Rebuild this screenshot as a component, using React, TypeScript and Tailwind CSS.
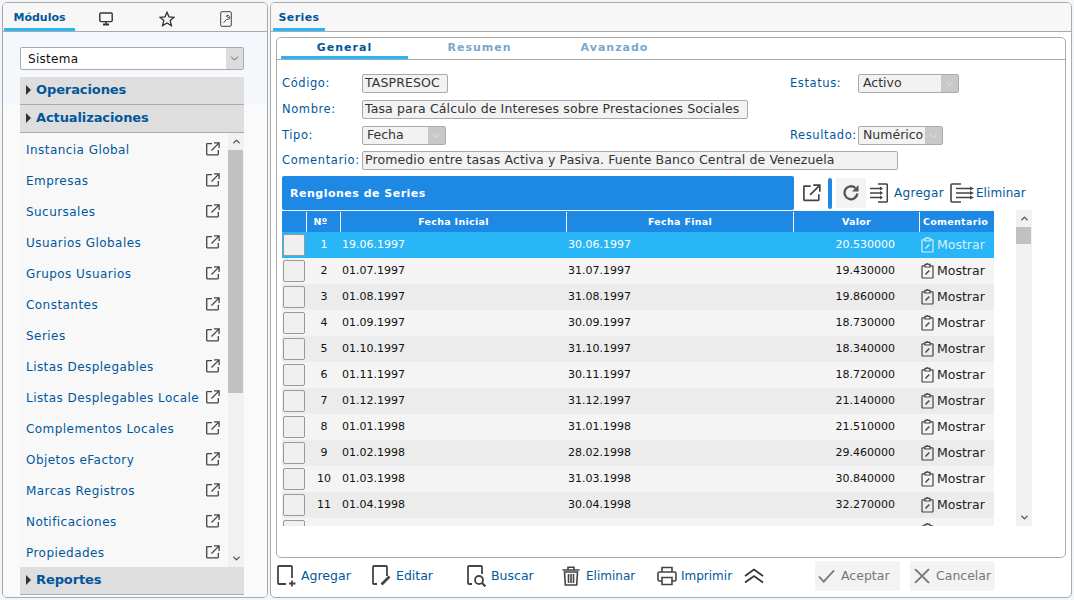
import { ChevronDown, ChevronUp } from 'lucide-react';

const modules = [
  'Instancia Global',
  'Empresas',
  'Sucursales',
  'Usuarios Globales',
  'Grupos Usuarios',
  'Constantes',
  'Series',
  'Listas Desplegables',
  'Listas Desplegables Locale',
  'Complementos Locales',
  'Objetos eFactory',
  'Marcas Registros',
  'Notificaciones',
  'Propiedades',
];

const rows = [
  ['1', '19.06.1997', '30.06.1997', '20.530000'],
  ['2', '01.07.1997', '31.07.1997', '19.430000'],
  ['3', '01.08.1997', '31.08.1997', '19.860000'],
  ['4', '01.09.1997', '30.09.1997', '18.730000'],
  ['5', '01.10.1997', '31.10.1997', '18.340000'],
  ['6', '01.11.1997', '30.11.1997', '18.720000'],
  ['7', '01.12.1997', '31.12.1997', '21.140000'],
  ['8', '01.01.1998', '31.01.1998', '21.510000'],
  ['9', '01.02.1998', '28.02.1998', '29.460000'],
  ['10', '01.03.1998', '31.03.1998', '30.840000'],
  ['11', '01.04.1998', '30.04.1998', '32.270000'],
  ['', '', '', ''], // only the top of this row shows above the fold
];

const ExternalIcon = ({ size = 14 }: { size?: number }) => (
  <svg width={size} height={size} viewBox="0 0 14 14" fill="none" stroke="currentColor" strokeWidth="1.3">
    <path d="M6 1.7H1.2a.5.5 0 0 0-.5.5v10.1a.5.5 0 0 0 .5.5h10.6a.5.5 0 0 0 .5-.5V8" />
    <path d="M5.5 8.5 12.6 1.4M8 .9h5.1V6" />
  </svg>
);

const ClipIcon = () => (
  <svg width="13" height="16" viewBox="0 0 13 16" fill="none" stroke="currentColor" strokeWidth="1.2">
    <path d="M4 2.8H1.600a.6.6 0 0 0-.6.6v11a.6.6 0 0 0 .6.6h9.800a.6.6 0 0 0 .6-.6v-11a.6.6 0 0 0-.6-.6H9" />
    <path d="M4 4V1.400h1.700a.8.8 0 0 1 1.600 0H9V4z" />
    <path d="M4.500 11.500 8.300 7.500" strokeWidth="1.400" />
  </svg>
);

const Arrow = () => <span className="mr-[5px] h-0 w-0 border-y-[5px] border-l-[5px] border-y-transparent border-l-[#333]" />;

const Group = ({ label }: { label: string }) => (
  <div className="flex h-[28px] items-center border-b border-[#aaa] bg-[#dedede] pb-[2px] pl-[6px] text-[13px] font-bold tracking-[-0.1px] text-[#01579b]">
    <Arrow />
    {label}
  </div>
);

const ReadBox = ({ w, children }: { w: string; children: string }) => (
  <div className={`flex h-[19px] items-center rounded-[2px] border border-[#aaa] bg-[#f2f2f2] pl-[2px] text-[12.5px] tracking-[0.12px] text-[#333] ${w}`}>{children}</div>
);

const ReadSelect = ({ w, children }: { w: string; children: string }) => (
  <div className={`flex h-[19px] items-center justify-between rounded-[2px] border border-[#aaa] bg-[#f2f2f2] pl-[4px] text-[12.5px] text-[#333] ${w}`}>
    {children}
    <span className="flex h-full w-[17px] items-center justify-center bg-[#c8c8c8] text-[#e8e8e8]">
      <ChevronDown size={13} strokeWidth={1.5} />
    </span>
  </div>
);

const Label = ({ w, children }: { w: string; children: string }) => (
  <div className={`text-[11.5px] tracking-[0.6px] text-[#01579b] ${w}`}>{children}</div>
);

const ToolBtn = ({ w, icon, label, text = 'text-[12.5px]' }: { w: string; icon: React.ReactNode; label: string; text?: string }) => (
  <div className={`flex items-center text-[#01579b] ${text} ${w}`}>
    <span className="flex w-[24px] shrink-0 items-center text-[#444]">{icon}</span>
    {label}
  </div>
);

export default function App() {
  return (
    <div className="flex h-[600px] w-[1074px] gap-[2px] overflow-hidden bg-[#f3f6f9] p-[2px] font-['DejaVu_Sans',sans-serif]">
      {/* left panel */}
      <div className="flex h-[596px] w-[266px] shrink-0 flex-col overflow-hidden rounded-[5px] border border-[#aaa] bg-[#fafafa]">
        <div className="flex h-[29px] shrink-0 items-stretch border-b border-[#aaa] bg-[#f7f7f7] pl-[1px]">
          <div className="flex w-[71px] items-center justify-center border-b-[3px] border-[#29b6f6] pt-[5px] text-[11px] font-bold text-[#01579b]">Módulos</div>
          <div className="flex w-[62px] items-center justify-center pt-[3px] text-[#333]">
            <svg width="14" height="14" viewBox="0 0 14 14" fill="none" stroke="currentColor" strokeWidth="1.4">
              <rect x="0.8" y="1" width="12.4" height="8.6" rx="1" />
              <path d="M4 12.6h6" strokeWidth="2" />
              <path d="M7 10v2" />
            </svg>
          </div>
          <div className="flex w-[59px] items-center justify-center pt-[3px] text-[#333]">
            <svg width="16" height="16" viewBox="0 0 16 16" fill="none" stroke="currentColor" strokeWidth="1.3">
              <path d="m8 1.2 2 4.6 5 .5-3.8 3.3 1.2 5L8 12l-4.4 2.6 1.2-5L1 6.3l5-.5z" />
            </svg>
          </div>
          <div className="flex w-[60px] items-center justify-center pt-[3px] text-[#444]">
            <svg width="12" height="16" viewBox="0 0 12 16" fill="none" stroke="currentColor" strokeWidth="1">
              <rect x="0.7" y="0.7" width="10.6" height="14.6" rx="1.2" />
              <path d="m3.600 11.800 3-3.600M6 5.800a2 2 0 0 1 2.600-1.400L7.400 5.800l1 1 1.300-1.200A2 2 0 0 1 7 8.200" />
            </svg>
          </div>
        </div>
        <div className="flex min-h-0 flex-1 flex-col bg-gradient-to-b from-[#f4f7fb] from-[13%] to-[#fafafa] to-[13%] pl-[17px] pr-[23px] pt-[15px]">
          <div className="flex h-[23px] shrink-0 items-center justify-between rounded-[2px] border border-[#aaa] bg-white pl-[7px] text-[12px] tracking-[0.3px] text-[#111]">
            Sistema
            <span className="flex h-full w-[17px] items-center justify-center bg-[#dcdcdc] text-[#444]">
              <ChevronDown size={13} strokeWidth={1.5} />
            </span>
          </div>
          <div className="mt-[7px] shrink-0 overflow-hidden rounded-t-[2px]">
            <Group label="Operaciones" />
            <Group label="Actualizaciones" />
          </div>
          <div className="flex h-[434px] shrink-0 bg-[#f8f8f8]">
            <div className="min-w-0 flex-1 overflow-hidden pl-[6px] pt-[1px]">
              {modules.map((m) => (
                <div key={m} className="flex h-[31px] items-center justify-between pr-[8px] text-[12px] tracking-[0.45px] text-[#01579b]">
                  <span className="whitespace-nowrap">{m}</span>
                  <span className="mb-[2px] text-[#444]"><ExternalIcon /></span>
                </div>
              ))}
            </div>
            <div className="flex w-[16px] shrink-0 flex-col items-center justify-between bg-[#f1f1f1]">
              <div className="flex h-[17px] items-center"><ChevronUp size={11} strokeWidth={3} className="text-[#505050]" /></div>
              <div className="w-full flex-1">
                <div className="h-[243px] w-[15px] bg-[#c1c1c1]" />
              </div>
              <div className="flex h-[17px] items-center"><ChevronDown size={11} strokeWidth={3} className="text-[#505050]" /></div>
            </div>
          </div>
          <Group label="Reportes" />
        </div>
      </div>

      {/* right panel */}
      <div className="flex h-[596px] w-[802px] min-w-0 flex-col overflow-hidden rounded-[5px] border border-[#aaa] bg-white">
        <div className="flex h-[29px] shrink-0 items-stretch border-b border-[#aaa] bg-[#f7f7f7] pl-[2px]">
          <div className="flex w-[52px] items-center justify-center border-b-[3px] border-[#29b6f6] pt-[5px] text-[11px] font-bold tracking-[0.4px] text-[#01579b]">Series</div>
        </div>
        <div className="mx-[5px] mt-[5px] flex h-[521px] shrink-0 flex-col rounded-[5px] border border-[#aaa] bg-white">
          <div className="flex h-[22px] shrink-0 items-stretch gap-[8px] border-b border-[#aaa] pl-[4px]">
            <div className="flex w-[127px] items-center justify-center border-b-[3px] border-[#29b6f6] pt-[3px] text-[11px] font-bold tracking-[1px] text-[#01579b]">General</div>
            <div className="flex w-[127px] items-center justify-center pb-[1px] text-[11px] font-bold tracking-[1px] text-[#7ba7cc]">Resumen</div>
            <div className="flex w-[127px] items-center justify-center pb-[1px] text-[11px] font-bold tracking-[1px] text-[#7ba7cc]">Avanzado</div>
          </div>
          <div className="flex flex-col gap-[7px] pl-[5px] pt-[14px]">
            <div className="flex items-center">
              <div className="flex w-[508px] items-center">
                <Label w="w-[80px]">Código:</Label>
                <ReadBox w="w-[86px]">TASPRESOC</ReadBox>
              </div>
              <Label w="w-[68px]">Estatus:</Label>
              <ReadSelect w="w-[101px]">Activo</ReadSelect>
            </div>
            <div className="flex items-center">
              <Label w="w-[80px]">Nombre:</Label>
              <ReadBox w="w-[386px]">Tasa para Cálculo de Intereses sobre Prestaciones Sociales</ReadBox>
            </div>
            <div className="-mb-[1px] flex items-center">
              <div className="flex w-[508px] items-center">
                <Label w="w-[80px]">Tipo:</Label>
                <ReadSelect w="w-[84px]">Fecha</ReadSelect>
              </div>
              <Label w="w-[68px]">Resultado:</Label>
              <ReadSelect w="w-[85px]">Numérico</ReadSelect>
            </div>
            <div className="flex items-center">
              <Label w="w-[80px]">Comentario:</Label>
              <ReadBox w="w-[536px]">Promedio entre tasas Activa y Pasiva. Fuente Banco Central de Venezuela</ReadBox>
            </div>
          </div>

          <div className="mt-[6px] flex h-[34px] shrink-0 items-center pl-[5px]">
            <div className="flex h-[34px] w-[512px] items-center rounded-[2px] bg-[#1e88e5] pl-[8px] pt-[2px] text-[11px] font-bold tracking-[0.5px] text-white">Renglones de Series</div>
            <span className="ml-[9px] text-[#444]"><ExternalIcon size={18} /></span>
            <span className="ml-[7px] h-[31px] w-[4px] rounded-[2px] bg-[#1e88e5]" />
            <span className="ml-[4px] flex h-[30px] w-[30px] items-center justify-center rounded-[2px] bg-[#f3f3f3] text-[#555]">
              <svg width="18" height="18" viewBox="0 0 18 18" fill="none" stroke="currentColor" strokeWidth="2.3">
                <path d="M15.400 9.500A6.500 6.500 0 1 1 13.400 4" />
                <path d="M16.500 1v6.500H10z" fill="currentColor" stroke="none" />
              </svg>
            </span>
            <span className="ml-[4px] text-[#444]">
              <svg width="18" height="20" viewBox="0 0 18 20" fill="none" stroke="currentColor" strokeWidth="1.6">
                <path d="M8 1h8.500a.8.800 0 0 1 .8.800v16.400a.8.800 0 0 1-.8.800H8" />
                <path d="M0 5.500h12M0 10h12M0 14.500h12" strokeWidth="1.300" />
                <path d="m10 3.500 3 2-3 2zM10 8l3 2-3 2zM10 12.500l3 2-3 2z" fill="currentColor" stroke="none" />
              </svg>
            </span>
            <span className="ml-[6px] text-[12px] tracking-[0.3px] text-[#01579b]">Agregar</span>
            <span className="ml-[6px] text-[#444]">
              <svg width="24" height="20" viewBox="0 0 24 20" fill="none" stroke="currentColor" strokeWidth="1.600">
                <path d="M11 1H2a1 1 0 0 0-1 1v16a1 1 0 0 0 1 1h9" />
                <path d="M6 5.500h15M6 10h15M6 14.500h15" strokeWidth="1.300" />
                <path d="m20 3.500 4 2-4 2zM20 8l4 2-4 2zM20 12.500l4 2-4 2z" fill="currentColor" stroke="none" />
              </svg>
            </span>
            <span className="ml-[2px] text-[12px] tracking-[0.1px] text-[#01579b]">Eliminar</span>
          </div>

          <div className="flex h-[316px] shrink-0 pl-[5px]">
            <div className="h-full w-[712px] overflow-hidden bg-[#fafafa]">
              <div className="mt-[1px] grid h-[21px] grid-cols-[25px_34px_226px_227px_126px_74px] bg-[#1e88e5] pt-[1px] text-[9.5px] font-bold tracking-[0.3px] text-white">
                <div className="border-r border-white" />
                <div className="flex items-center justify-center border-r border-white pr-[6px]">Nº</div>
                <div className="flex items-center justify-center border-r border-white">Fecha Inicial</div>
                <div className="flex items-center justify-center border-r border-white">Fecha Final</div>
                <div className="flex items-center justify-center border-r border-white">Valor</div>
                <div className="flex items-center justify-center whitespace-nowrap pr-[3px]">Comentario</div>
              </div>
              {rows.map((r, i) => {
                const selected = i === 0;
                const bg = selected ? 'bg-[#29b6f6] text-white' : i % 2 === 1 ? 'bg-[#f4f4f4] text-[#111]' : 'bg-[#ececec] text-[#111]';
                return (
                  <div key={i} className={`grid h-[26px] grid-cols-[25px_34px_226px_227px_126px_74px] items-center text-[11px] ${bg}`}>
                    <div className="pl-[1px]">
                      <div className="h-[22px] w-[22px] rounded-[2px] border border-[#999] bg-[#f0f0f0]" />
                    </div>
                    <div className="text-center">{r[0]}</div>
                    <div className="pl-[1px]">{r[1]}</div>
                    <div className="pl-[1px]">{r[2]}</div>
                    <div className="pr-[25px] text-right">{r[3]}</div>
                    <div className={`flex items-center gap-[3px] pl-[1px] text-[12.5px] ${selected ? 'text-[#d5f0fd]' : 'text-[#222]'}`}>
                      <span className={selected ? 'text-[#d5f0fd]' : 'text-[#444]'}><ClipIcon /></span>
                      {r[1] && 'Mostrar'}
                    </div>
                  </div>
                );
              })}
            </div>
            <div className="ml-[22px] flex h-full w-[16px] shrink-0 flex-col items-center justify-between bg-[#f1f1f1]">
              <div className="flex h-[17px] items-center"><ChevronUp size={11} strokeWidth={3} className="text-[#505050]" /></div>
              <div className="w-full flex-1">
                <div className="h-[17px] w-[15px] bg-[#c1c1c1]" />
              </div>
              <div className="flex h-[17px] items-center"><ChevronDown size={11} strokeWidth={3} className="text-[#505050]" /></div>
            </div>
          </div>
        </div>

        <div className="flex h-[40px] shrink-0 items-center pb-[4px] pl-[6px]">
          <ToolBtn
            w="w-[95px]"
            label="Agregar"
            icon={
              <svg width="20" height="22" viewBox="0 0 20 22" fill="none" stroke="currentColor" strokeWidth="1.8">
                <path d="M9 19H2a1 1 0 0 1-1-1V2a1 1 0 0 1 1-1h12a1 1 0 0 1 1 1v11" />
                <path d="M15 15.500v6M12 18.500h6.500" />
              </svg>
            }
          />
          <ToolBtn
            w="w-[95px]"
            label="Editar"
            icon={
              <svg width="20" height="22" viewBox="0 0 20 22" fill="none" stroke="currentColor" strokeWidth="1.8">
                <path d="M5 19H2a1 1 0 0 1-1-1V2a1 1 0 0 1 1-1h12a1 1 0 0 1 1 1v9" />
                <path d="m9.500 19.500 8-8" strokeWidth="2.600" />
              </svg>
            }
          />
          <ToolBtn
            w="w-[95px]"
            label="Buscar"
            icon={
              <svg width="20" height="22" viewBox="0 0 20 22" fill="none" stroke="currentColor" strokeWidth="1.8">
                <path d="M5 19H2a1 1 0 0 1-1-1V2a1 1 0 0 1 1-1h12a1 1 0 0 1 1 1v7" />
                <circle cx="12" cy="15" r="4" />
                <path d="m15 18 3.400 3.400" strokeWidth="2.200" />
              </svg>
            }
          />
          <ToolBtn
            w="w-[95px]"
            label="Eliminar"
            text="text-[12px]"
            icon={
              <svg width="18" height="20" viewBox="0 0 18 20" fill="none" stroke="currentColor" strokeWidth="1.6">
                <path d="M.5 4h17M6 3.500V1.200h6v2.300" />
                <path d="M2.500 6h13l-.8 13H3.300z" />
                <path d="M6.500 8v9M9 8v9M11.500 8v9" />
              </svg>
            }
          />
          <ToolBtn
            w="w-[78px]"
            label="Imprimir"
            text="text-[12px]"
            icon={
              <svg width="20" height="20" viewBox="0 0 20 20" fill="none" stroke="currentColor" strokeWidth="1.6">
                <path d="M5 6V1.500h10V6M5 15H2.500A1.500 1.500 0 0 1 1 13.500v-6A1.500 1.500 0 0 1 2.500 6h15A1.500 1.500 0 0 1 19 7.500v6a1.500 1.500 0 0 1-1.500 1.500H15" />
                <path d="M5 11.500h10v7H5z" />
              </svg>
            }
          />
          <span className="ml-[9px] text-[#333]">
            <svg width="20" height="16" viewBox="0 0 20 16" fill="none" stroke="currentColor" strokeWidth="1.8">
              <path d="m1 8 9-6.500L19 8M1 14.500 10 8l9 6.500" />
            </svg>
          </span>
          <div className="ml-[51px] flex h-[30px] w-[85px] items-center rounded-[2px] bg-[#f3f3f3] pl-[3px] text-[12.5px] text-[#777]">
            <svg className="mr-[6px]" width="17" height="14" viewBox="0 0 18 14" fill="none" stroke="#777" strokeWidth="1.8">
              <path d="m1 7.500 5 5.500L17 1" />
            </svg>
            Aceptar
          </div>
          <div className="ml-[10px] flex h-[30px] w-[85px] items-center rounded-[2px] bg-[#f3f3f3] pl-[4px] text-[12.5px] text-[#777]">
            <svg className="mr-[6px]" width="16" height="16" viewBox="0 0 15 15" fill="none" stroke="#777" strokeWidth="1.8">
              <path d="m1 1 13 13M14 1 1 14" />
            </svg>
            Cancelar
          </div>
        </div>
      </div>
    </div>
  );
}
